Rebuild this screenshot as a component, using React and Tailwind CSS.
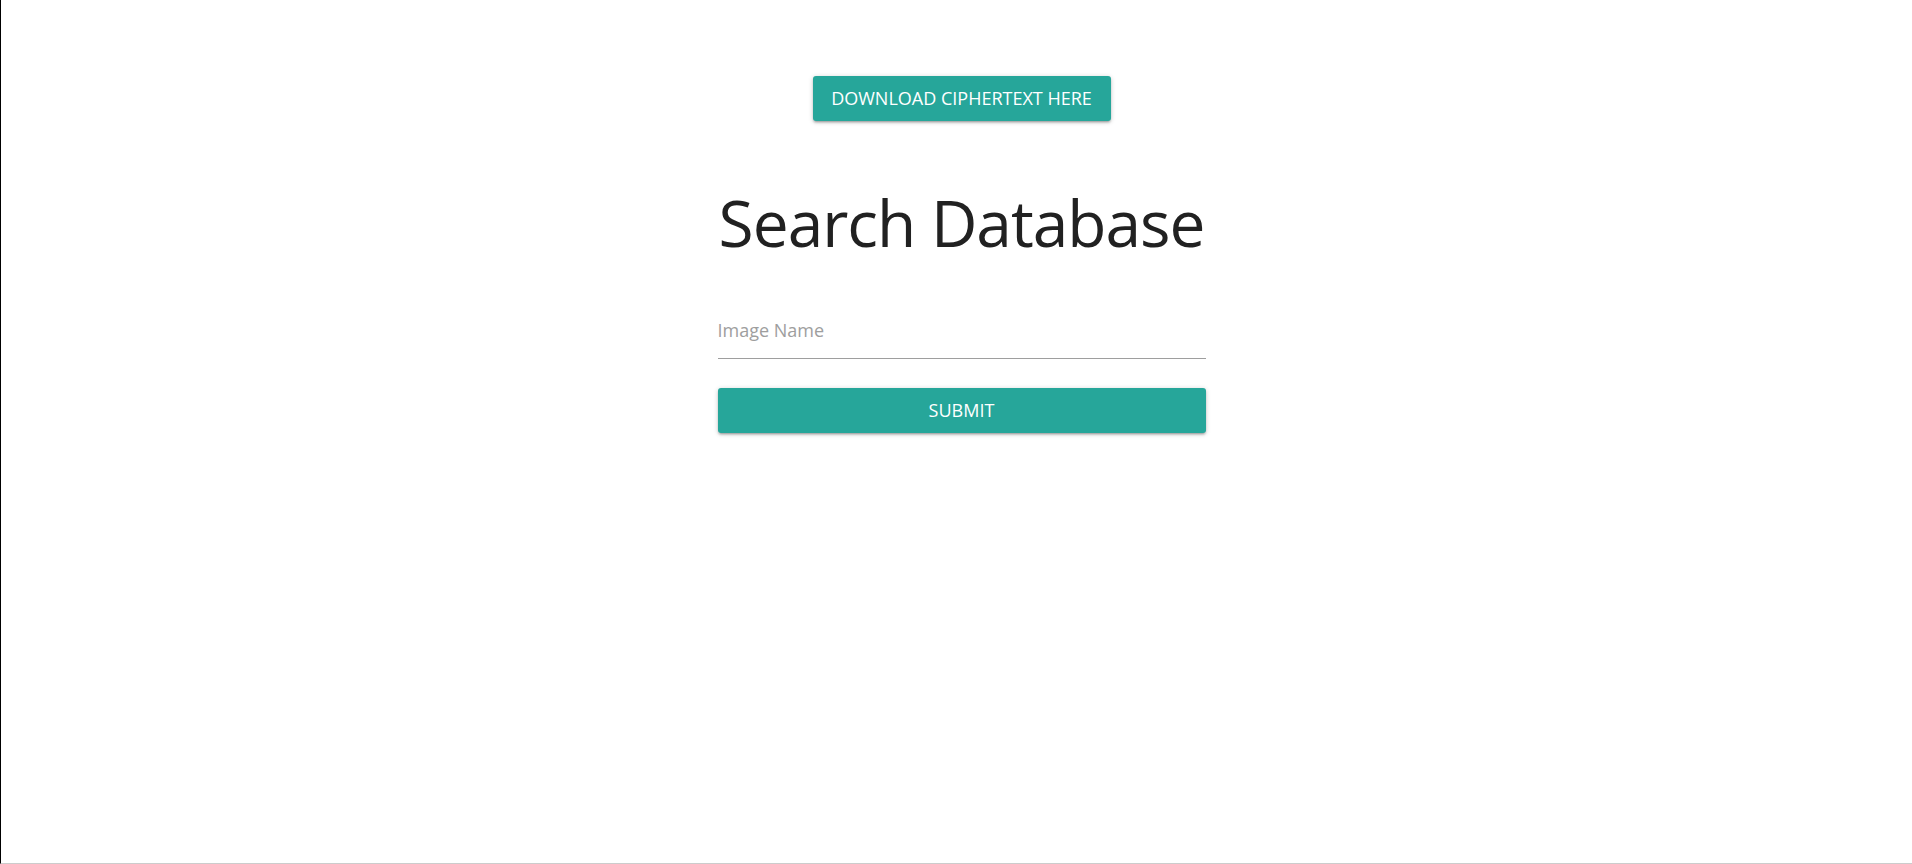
import React from 'react';

const shadow = 'shadow-[0_2px_2px_0_rgba(0,0,0,0.14),0_3px_1px_-2px_rgba(0,0,0,0.12),0_1px_5px_0_rgba(0,0,0,0.2)]';

const App = () => {
  return (
    <div className="h-[864px] border-l border-black border-b border-b-[#cccccc] bg-white font-['Open_Sans',sans-serif] overflow-hidden">
      <div className="pl-[10px] flex flex-col items-center">
        <button className={`mt-[76px] h-[45px] w-[298px] rounded-[3px] bg-[#26a69a] text-white text-[18px] uppercase whitespace-nowrap ${shadow}`}>
          Download Ciphertext Here
        </button>
        <div className="w-[488px] flex flex-col">
          <h3 className="mt-[57px] text-center text-[64px] leading-[90px] whitespace-nowrap tracking-[-1px] text-[#212121]">Search Database</h3>
          <div className="mt-[35px] h-[56px] border-b border-[#9e9e9e] flex items-center">
            <input
              type="text"
              placeholder="Image Name"
              className="w-full outline-none text-[18px] text-[#212121] placeholder:text-[#9e9e9e]"
            />
          </div>
          <button className={`mt-[29px] h-[45px] w-full rounded-[3px] bg-[#26a69a] text-white text-[18px] uppercase ${shadow}`}>
            Submit
          </button>
        </div>
      </div>
    </div>
  );
};

export default App;
